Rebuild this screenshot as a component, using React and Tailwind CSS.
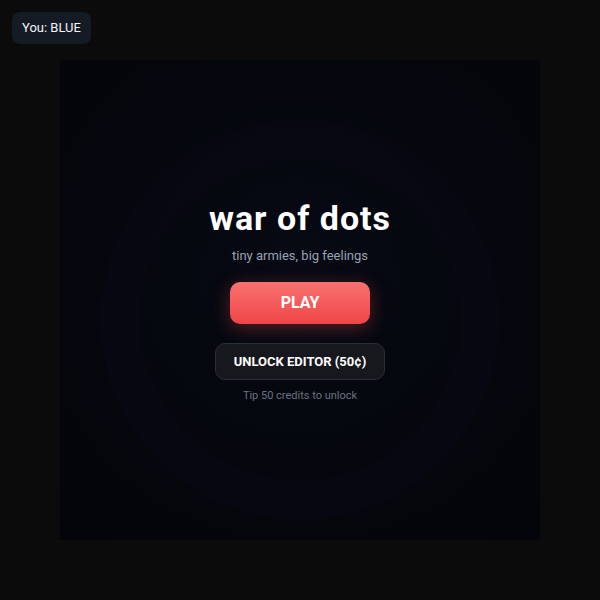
import React from 'react';

const App = () => {
  return (
    <div
      className="relative w-full h-[600px] bg-[#0b0b0c] flex items-center justify-center"
      style={{ fontFamily: 'Roboto, "Liberation Sans", sans-serif' }}
    >
      {/* Player badge */}
      <div className="absolute top-3 left-3 h-8 px-2.5 flex items-center rounded-lg bg-[#151b25] text-[13px] text-gray-100">
        You: BLUE
      </div>

      {/* Board */}
      <div className="relative w-[480px] h-[480px] bg-[#04060c] overflow-hidden">
        <div className="absolute inset-0 bg-[radial-gradient(circle_at_50%_45%,#070a14_0%,#05070e_45%,#03050a_100%)]" />
        <div className="absolute left-[40px] top-[60px] w-[400px] h-[400px] rounded-full border-[40px] border-[#060914] opacity-60" />

        {/* Menu */}
        <div className="relative h-full pt-[2px] flex flex-col items-center justify-center text-center">
          <h1 className="text-[34px] leading-[40px] font-bold text-white tracking-[1px]">war of dots</h1>
          <p className="mt-[9px] text-[13px] leading-[18px] text-gray-400">tiny armies, big feelings</p>
          <button className="mt-[17px] w-[140px] h-[42px] rounded-[10px] bg-gradient-to-b from-[#f87171] to-[#ef4444] text-white font-bold text-[16px] shadow-[0_4px_18px_rgba(239,68,68,0.35)]">
            PLAY
          </button>
          <button className="mt-[19px] w-[170px] h-[37px] rounded-[10px] bg-[#17181d] border border-[#2b2e36] text-white font-bold text-[13px]">
            UNLOCK EDITOR (50¢)
          </button>
          <p className="mt-[8px] text-[11px] leading-4 text-gray-500">Tip 50 credits to unlock</p>
        </div>
      </div>
    </div>
  );
};

export default App;
